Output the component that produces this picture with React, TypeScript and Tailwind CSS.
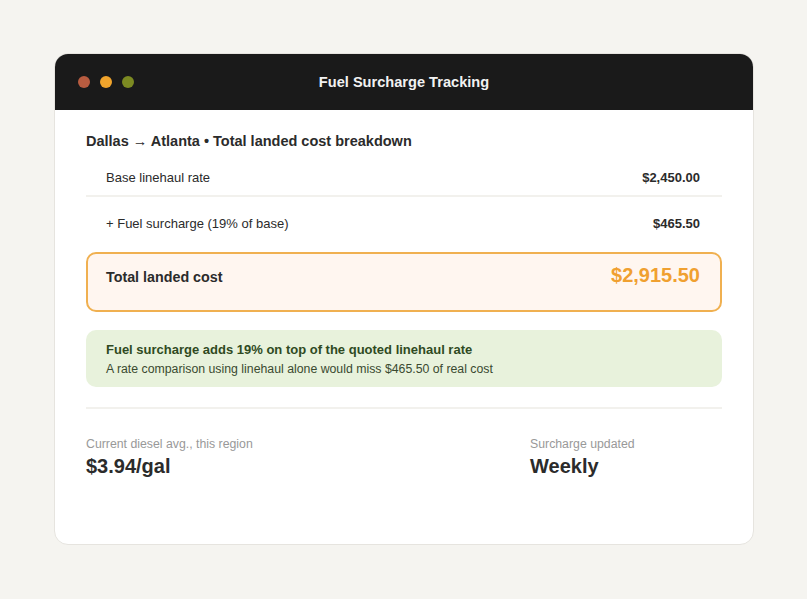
const rows = [
  { label: "Base linehaul rate", value: "$2,450.00" },
  { label: "+ Fuel surcharge (19% of base)", value: "$465.50" },
];

const App = () => {
  return (
    <div className="min-h-screen bg-[#f5f4f0] pt-[53px] pl-[54px] font-['Liberation_Sans',Arial,sans-serif]">
      <div className="w-[700px] h-[492px] overflow-hidden rounded-[14px] border border-[#e6e4df] bg-white">
        <div className="relative flex h-[56px] items-center bg-[#1a1a1a] px-[23px]">
          <div className="flex gap-[10px]">
            <span className="h-[12px] w-[12px] rounded-full bg-[#b85c40]" />
            <span className="h-[12px] w-[12px] rounded-full bg-[#f0a42c]" />
            <span className="h-[12px] w-[12px] rounded-full bg-[#7c8a22]" />
          </div>
          <div className="absolute inset-0 flex items-center justify-center pt-[2px] text-[14.6px] font-bold text-[#f2f2f2]">
            Fuel Surcharge Tracking
          </div>
        </div>

        <div className="px-[31px] pt-[21px]">
          <h2 className="text-[14.5px] font-bold text-[#2b2b2b]">
            Dallas → Atlanta • Total landed cost breakdown
          </h2>

          <div className="mt-[8px]">
            {rows.map((row, i) => (
              <div
                key={row.label}
                className={`flex h-[36px] items-center justify-between pl-[20px] pr-[22px] text-[13px] text-[#2b2b2b] ${
                  i === 0 ? "border-b-2 border-[#f2f1ed]" : "mt-[9px]"
                }`}
              >
                <span>{row.label}</span>
                <span className="font-bold">{row.value}</span>
              </div>
            ))}
          </div>

          <div className="mt-[10px] flex h-[60px] items-start justify-between rounded-[10px] border-2 border-[#f0b050] bg-[#fff6f0] pl-[18px] pr-[20px] pt-[6px]">
            <span className="mt-[7px] text-[14.3px] font-bold text-[#2b2b2b]">Total landed cost</span>
            <span className="text-[20px] font-bold text-[#f0a030]">$2,915.50</span>
          </div>

          <div className="mt-[18px] rounded-[10px] bg-[#e8f2dc] px-[20px] pt-[10px] pb-[8px]">
            <div className="text-[13px] font-bold text-[#2f4a22]">
              Fuel surcharge adds 19% on top of the quoted linehaul rate
            </div>
            <div className="mt-[1px] text-[12.3px] text-[#3a4a30]">
              A rate comparison using linehaul alone would miss $465.50 of real cost
            </div>
          </div>

          <div className="mt-[20px] border-t-2 border-[#f2f1ed]" />

          <div className="mt-[26px] grid grid-cols-[444px_1fr]">
            <div>
              <div className="text-[12.3px] leading-[18px] text-[#999]">Current diesel avg., this region</div>
              <div className="text-[20px] leading-[26px] font-bold text-[#2b2b2b]">$3.94/gal</div>
            </div>
            <div>
              <div className="text-[12.3px] leading-[18px] text-[#999]">Surcharge updated</div>
              <div className="text-[20px] leading-[26px] font-bold text-[#2b2b2b]">Weekly</div>
            </div>
          </div>
        </div>
      </div>
    </div>
  );
};

export default App;
